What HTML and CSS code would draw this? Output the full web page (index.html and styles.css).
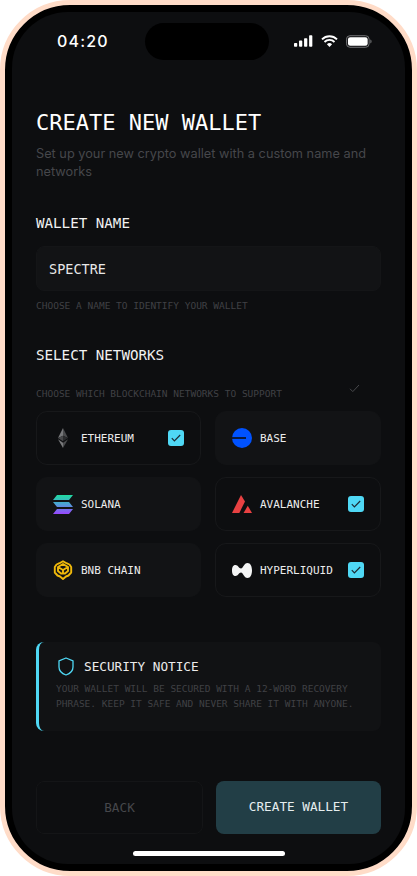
FILE: index.html
```html
<!DOCTYPE html>
<html lang="en">
<head>
  <meta charset="UTF-8">
  <meta name="viewport" content="width=device-width, initial-scale=1.0">
  <title>Create New Wallet</title>
  <link rel="stylesheet" href="styles.css">
</head>
<body>
  <div class="phone">
    <div class="screen">
      <div class="island"></div>

      <div class="status-bar">
        <span class="time">04:20</span>
        <div class="status-icons">
          <svg width="19" height="12" viewBox="0 0 20 12">
            <rect x="0" y="8" width="3.400" height="4" rx="0.800" fill="#fff"/>
            <rect x="5.300" y="5.600" width="3.400" height="6.400" rx="0.800" fill="#fff"/>
            <rect x="10.600" y="3" width="3.400" height="9" rx="0.800" fill="#fff"/>
            <rect x="15.900" y="0" width="3.400" height="12" rx="0.800" fill="#fff"/>
          </svg>
          <svg width="17" height="13" viewBox="0 0 17 13">
            <path d="M1 4.400a10.600 10.600 0 0 1 15 0M3.500 7a7 7 0 0 1 10 0" fill="none" stroke="#fff" stroke-width="1.900"/>
            <path d="M5.900 9.300a3.700 3.700 0 0 1 5.200 0L8.500 12z" fill="#fff"/>
          </svg>
          <svg width="26" height="13" viewBox="0 0 27 13">
            <rect x="0.500" y="0.500" width="23.500" height="12" rx="3.600" fill="none" stroke="#77787a"/>
            <rect x="2" y="2" width="20.500" height="9" rx="2.400" fill="#fff"/>
            <path d="M25.300 4.500c.9.300 1.200 1.100 1.200 2s-.3 1.700-1.200 2z" fill="#77787a"/>
          </svg>
        </div>
      </div>

      <h1 class="title">CREATE NEW WALLET</h1>
      <p class="subtitle">Set up your new crypto wallet with a custom name and networks</p>

      <h2 class="label name-label">WALLET NAME</h2>
      <div class="input">SPECTRE</div>
      <p class="hint">CHOOSE A NAME TO IDENTIFY YOUR WALLET</p>

      <h2 class="label networks-label">SELECT NETWORKS</h2>
      <div class="hint-row">
        <p class="hint">CHOOSE WHICH BLOCKCHAIN NETWORKS TO SUPPORT</p>
        <svg class="stray-check" width="11" height="9" viewBox="0 0 11 9">
          <path d="M1 4.800l2.800 2.800L10 1" fill="none" stroke="#47484b" stroke-width="1"/>
        </svg>
      </div>

      <div class="network-grid">
        <div class="network selected">
          <svg class="logo" width="20" height="20" viewBox="0 0 20 20">
            <path d="M10 0L5 10l5-2.200z" fill="#77787a"/>
            <path d="M10 0l5 10-5-2.200z" fill="#4a4b4d"/>
            <path d="M10 7.800L5 10l5 3.200z" fill="#47484a"/>
            <path d="M10 7.800l5 2.200-5 3.200z" fill="#2a2b2d"/>
            <path d="M5 11.200L10 20v-5.300z" fill="#77787a"/>
            <path d="M15 11.200L10 20v-5.300z" fill="#4a4b4d"/>
          </svg>
          <span class="network-name">ETHEREUM</span>
          <span class="checkbox">
            <svg width="10" height="8" viewBox="0 0 10 8"><path d="M.8 4.200l2.600 2.600L9.200 1" fill="none" stroke="#1c2a33" stroke-width="1.200"/></svg>
          </span>
        </div>
        <div class="network">
          <svg class="logo" width="20" height="20" viewBox="0 0 20 20">
            <circle cx="10" cy="10" r="10" fill="#0052ff"/>
            <rect x="0" y="9.200" width="14" height="1.600" fill="#0d0e10"/>
          </svg>
          <span class="network-name">BASE</span>
        </div>
        <div class="network">
          <svg class="logo" width="20" height="19" viewBox="0 0 20 19">
            <defs>
              <linearGradient id="sol" x1="0" y1="0" x2="0" y2="1">
                <stop offset="0" stop-color="#1fdca0"/>
                <stop offset="0.5" stop-color="#4f9fd8"/>
                <stop offset="1" stop-color="#9945ff"/>
              </linearGradient>
            </defs>
            <path d="M4 0H20L16 5H0zM0 7H16L20 12H4zM4 14H20L16 19H0z" fill="url(#sol)"/>
          </svg>
          <span class="network-name">SOLANA</span>
        </div>
        <div class="network selected">
          <svg class="logo" width="20" height="18" viewBox="0 0 20 18">
            <path d="M9 0L13 6.500 7.300 18H0z" fill="#e84142"/>
            <path d="M15.800 10.800L20 18H11.500z" fill="#e84142"/>
          </svg>
          <span class="network-name">AVALANCHE</span>
          <span class="checkbox">
            <svg width="10" height="8" viewBox="0 0 10 8"><path d="M.8 4.200l2.600 2.600L9.200 1" fill="none" stroke="#1c2a33" stroke-width="1.200"/></svg>
          </span>
        </div>
        <div class="network">
          <svg class="logo" width="20" height="20" viewBox="0 0 20 20">
            <g fill="none" stroke="#f0b90b" stroke-width="1.900" stroke-linejoin="round">
              <path d="M10 1.200L13.500 3.200 16.500 4.500 18.200 7v5.500L15.500 15.500 13 16.500 10 19 7 16.500 4.500 15.500 1.800 12.500V7L3.500 4.500 6.500 3.200z"/>
              <path d="M5 7l5-3 5 3-5 3zM10 10v3M5 7v4l3 2.500h4l3-2.500V7"/>
            </g>
          </svg>
          <span class="network-name">BNB CHAIN</span>
        </div>
        <div class="network selected">
          <svg class="logo" width="20" height="15" viewBox="0 0 20 15">
            <path d="M0 7.500C0 3.500 1.500 2 3.500 2 6 2 7 5.500 9 5.500 11 5.500 12 0 15.500 0 18.500 0 20 3.500 20 7.500S18.500 15 15.500 15C12 15 11 9.500 9 9.500 7 9.500 6 13 3.500 13 1.500 13 0 11.500 0 7.500z" fill="#f4f5f5"/>
          </svg>
          <span class="network-name">HYPERLIQUID</span>
          <span class="checkbox">
            <svg width="10" height="8" viewBox="0 0 10 8"><path d="M.8 4.200l2.600 2.600L9.200 1" fill="none" stroke="#1c2a33" stroke-width="1.200"/></svg>
          </span>
        </div>
      </div>

      <div class="notice">
        <div class="notice-head">
          <svg width="16" height="19" viewBox="0 0 16 19">
            <path d="M8 1l7 2.800v6.200c0 4-3 6.700-7 8-4-1.300-7-4-7-8V3.800z" fill="none" stroke="#4fd8f5" stroke-width="1.300" stroke-linejoin="round"/>
          </svg>
          <span class="notice-title">SECURITY NOTICE</span>
        </div>
        <p class="notice-text">YOUR WALLET WILL BE SECURED WITH A 12-WORD RECOVERY PHRASE. KEEP IT SAFE AND NEVER SHARE IT WITH ANYONE.</p>
      </div>

      <div class="actions">
        <button class="btn btn-back">BACK</button>
        <button class="btn btn-create">CREATE WALLET</button>
      </div>

      <div class="home-indicator"></div>
    </div>
  </div>
</body>
</html>
```

FILE: styles.css
```css
* {
  box-sizing: border-box;
}
body {
  margin: 0;
  background: #fff;
  font-family: 'DejaVu Sans Mono', monospace;
}
.phone {
  width: 417px;
  height: 876px;
  padding: 7px;
  border: 5px solid #ffdcc8;
  border-radius: 70px;
  background: #000;
}
.screen {
  position: relative;
  height: 100%;
  border-radius: 56px;
  background: #0d0e10;
  padding: 0 24px;
  overflow: hidden;
}
.island {
  position: absolute;
  left: 133px;
  top: 11px;
  width: 124px;
  height: 37px;
  border-radius: 19px;
  background: #000;
}
.status-bar {
  display: flex;
  justify-content: space-between;
  align-items: center;
  height: 20px;
  margin: 19px 9px 0 21px;
}
.time {
  font-family: 'Inter', sans-serif;
  font-size: 16px;
  font-weight: 500;
  letter-spacing: 1.200px;
  color: #fff;
}
.status-icons {
  display: flex;
  align-items: center;
  gap: 8px;
}
.title {
  margin: 58px 0 0;
  font-size: 22px;
  font-weight: 400;
  line-height: 28px;
  color: #fff;
}
.subtitle {
  margin: 8px 0 0;
  font-family: 'Inter', sans-serif;
  font-size: 12.750px;
  line-height: 18px;
  color: #46474b;
}
.label {
  margin: 0;
  font-size: 14.200px;
  font-weight: 400;
  line-height: 18px;
  color: #f2f2f2;
}
.name-label {
  margin-top: 33px;
}
.input {
  height: 45px;
  margin-top: 14px;
  padding: 1px 12px 0;
  display: flex;
  align-items: center;
  border: 1px solid #141517;
  border-radius: 8px;
  background: #121315;
  font-size: 13.500px;
  color: #e8e8e8;
}
.hint {
  margin: 9px 0 0;
  font-size: 9.500px;
  line-height: 12px;
  color: #404145;
}
.networks-label {
  margin-top: 34px;
}
.hint-row {
  display: flex;
  justify-content: space-between;
  align-items: flex-start;
  margin-top: 19px;
  padding-right: 21px;
}
.hint-row .hint {
  margin: 5px 0 0;
}
.stray-check {
  margin-top: 1px;
}
.network-grid {
  display: grid;
  grid-template-columns: 165px 166px;
  grid-auto-rows: 54px;
  column-gap: 14px;
  row-gap: 12px;
  margin-top: 11px;
}
.network {
  display: flex;
  align-items: center;
  padding: 0 16px;
  border: 1px solid #121315;
  border-radius: 11px;
  background: #121315;
}
.network.selected {
  border-color: #17181a;
  background: #0d0e10;
}
.logo {
  flex: none;
  margin-right: 8px;
}
.network-name {
  font-size: 11px;
  color: #ececec;
}
.checkbox {
  display: flex;
  align-items: center;
  justify-content: center;
  width: 16px;
  height: 16px;
  margin-left: auto;
  border-radius: 3px;
  background: #4fd8f5;
}
.notice {
  height: 89px;
  margin-top: 45px;
  padding: 15px 16px 0 19px;
  border-left: 3px solid #4fd8f5;
  border-radius: 8px;
  background: #111214;
}
.notice-head {
  display: flex;
  align-items: center;
  gap: 10px;
}
.notice-title {
  font-size: 12.700px;
  color: #ececec;
}
.notice-text {
  margin: 5px 0 0 -2px;
  font-size: 9.500px;
  line-height: 15px;
  color: #404145;
}
.actions {
  display: grid;
  grid-template-columns: 167px 165px;
  column-gap: 13px;
  margin-top: 50px;
}
.btn {
  height: 53px;
  border-radius: 8px;
  font-family: inherit;
  font-size: 12.700px;
}
.btn-back {
  border: 1px solid #141517;
  background: transparent;
  color: #46474b;
}
.btn-create {
  border: none;
  padding-bottom: 3px;
  background: #223e46;
  color: #e6eeef;
}
.home-indicator {
  position: absolute;
  left: 121px;
  bottom: 8px;
  width: 152px;
  height: 5px;
  border-radius: 3px;
  background: #fff;
}
```
